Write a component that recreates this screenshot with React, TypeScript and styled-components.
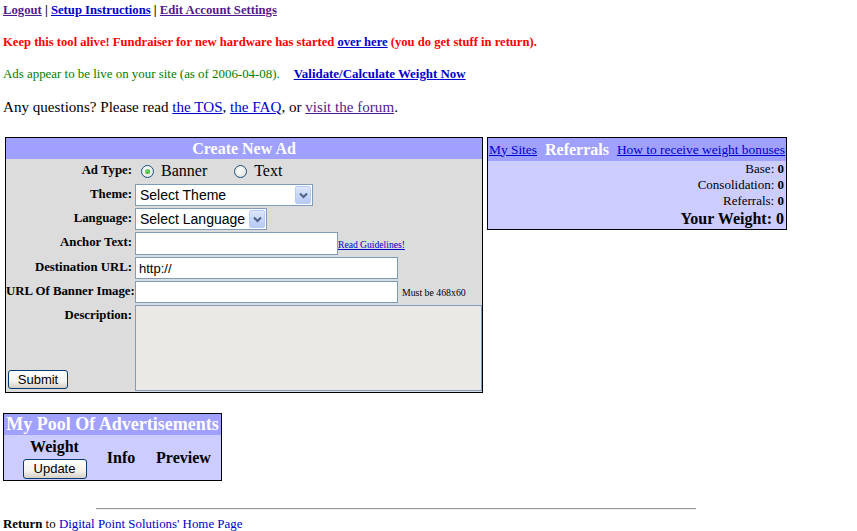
import React from "react";
import styled, { createGlobalStyle } from "styled-components";

const GlobalStyle = createGlobalStyle`
  html, body {
    margin: 0;
    background: #ffffff;
  }
  body {
    font-family: "Liberation Serif", "Times New Roman", serif;
    color: #000000;
  }
`;

const Page = styled.div`
  padding: 3px 3px 0;
`;

const Link = styled.a<{ $visited?: boolean }>`
  color: ${(p) => (p.$visited ? "#551a8b" : "#0000cc")};
  text-decoration: underline;
  cursor: pointer;
`;

const Nav = styled.div`
  font-size: 12.7px;
  font-weight: bold;
  line-height: 14px;
`;

const Alert = styled.div`
  margin-top: 18px;
  font-size: 12.6px;
  font-weight: bold;
  line-height: 14px;
  color: #ff0000;
`;

const Status = styled.div`
  margin-top: 18px;
  font-size: 12.9px;
  line-height: 14px;
  color: #008000;
`;

const StatusLink = styled(Link)`
  font-weight: bold;
  margin-left: 14px;
`;

const Question = styled.div`
  margin-top: 17px;
  font-size: 15.1px;
  line-height: 18px;
`;

const TopRow = styled.div`
  margin-top: 21px;
  padding-left: 2px;
  display: flex;
  align-items: flex-start;
  gap: 4px;
`;

const Panel = styled.div<{ $width: number; $bg: string }>`
  box-sizing: border-box;
  width: ${(p) => p.$width}px;
  border: 1px solid #000000;
  background: ${(p) => p.$bg};
`;

const PanelTitle = styled.div<{ $size: number }>`
  background: #a0a0ff;
  color: #ffffff;
  font-weight: bold;
  font-size: ${(p) => p.$size}px;
  line-height: 21px;
  height: 21px;
  text-align: center;
  white-space: nowrap;
`;

const FormGrid = styled.div`
  display: grid;
  grid-template-columns: 127px 347px;
  column-gap: 2px;
  row-gap: 2px;
  padding: 1px 0 1px;
`;

const Label = styled.div`
  font-size: 12.8px;
  font-weight: bold;
  line-height: 21px;
  text-align: right;
  white-space: nowrap;
  padding-right: 1px;
`;

const Field = styled.div<{ $align?: string }>`
  display: flex;
  align-items: ${(p) => p.$align ?? "center"};
  gap: 4px;
  min-height: 22px;
`;

const RadioGroup = styled.label`
  display: flex;
  align-items: center;
  font-size: 16px;
  margin-left: 6px;
  margin-right: 17px;
`;

const Radio = styled.input`
  appearance: none;
  width: 13px;
  height: 13px;
  margin: 0 7px 0 0;
  border: 1px solid #1c5180;
  border-radius: 50%;
  background: radial-gradient(circle at 40% 35%, #ffffff 0%, #dcdcd6 100%);
  display: grid;
  place-items: center;
  box-sizing: border-box;

  &:checked::after {
    content: "";
    width: 5px;
    height: 5px;
    border-radius: 50%;
    background: radial-gradient(circle at 40% 40%, #7fdc6c 0%, #21a121 100%);
  }
`;

const SelectWrap = styled.div<{ $width: number }>`
  position: relative;
  width: ${(p) => p.$width}px;
  height: 22px;
`;

const Select = styled.select`
  appearance: none;
  box-sizing: border-box;
  width: 100%;
  height: 100%;
  border: 1px solid #7f9db9;
  background: #ffffff;
  font-family: "Liberation Sans", Arial, sans-serif;
  font-size: 14px;
  padding: 0 0 0 4px;
  color: #000000;
`;

const SelectArrow = styled.span`
  position: absolute;
  right: 2px;
  top: 2px;
  width: 16px;
  height: 18px;
  box-sizing: border-box;
  border: 1px solid #b9cbf3;
  border-radius: 2px;
  background: linear-gradient(#dbe5fd, #b7c9f5);
  display: grid;
  place-items: center;
  pointer-events: none;
`;

const TextInput = styled.input<{ $width: number; $height?: number }>`
  box-sizing: border-box;
  width: ${(p) => p.$width}px;
  height: ${(p) => p.$height ?? 22}px;
  border: 1px solid #7f9db9;
  background: #ffffff;
  font-family: "Liberation Sans", Arial, sans-serif;
  font-size: 13px;
  padding: 0 3px;
  margin: 0;
`;

const Small = styled.span`
  font-size: 9.8px;
  white-space: nowrap;
`;

const SmallLink = styled(Link)`
  font-size: 9.6px;
  white-space: nowrap;
  margin-bottom: 5px;
  margin-left: -4px;
`;

const DescLabelCell = styled.div`
  display: flex;
  flex-direction: column;
  justify-content: space-between;
  align-items: stretch;
  padding-bottom: 2px;
`;

const TextArea = styled.textarea`
  box-sizing: border-box;
  width: 347px;
  height: 86px;
  border: 1px solid #7f9db9;
  background: #ebe9e5;
  resize: none;
  margin: 0;
`;

const XpButton = styled.button<{ $width: number; $height: number }>`
  width: ${(p) => p.$width}px;
  height: ${(p) => p.$height}px;
  border: 1px solid #003c74;
  border-radius: 3px;
  background: linear-gradient(#ffffff 0%, #f4f3ee 60%, #d6d0c5 100%);
  font-family: "Liberation Sans", Arial, sans-serif;
  font-size: 13px;
  color: #000000;
  padding: 0;
  line-height: 1;
`;

const SubmitButton = styled(XpButton)`
  margin-left: 2px;
`;

const RefHeader = styled.div`
  background: #a0a0ff;
  height: 23px;
  display: flex;
  align-items: center;
  justify-content: space-between;
  padding: 0 1px;
  font-size: 13.4px;
  white-space: nowrap;
`;

const RefTitle = styled.span`
  color: #ffffff;
  font-weight: bold;
  font-size: 16px;
`;

const RefBody = styled.div`
  padding: 0 2px 1px 0;
  text-align: right;
`;

const RefLine = styled.div<{ $big?: boolean }>`
  font-size: ${(p) => (p.$big ? 16 : 13)}px;
  line-height: ${(p) => (p.$big ? 19 : 16)}px;
  font-weight: ${(p) => (p.$big ? "bold" : "normal")};
  white-space: nowrap;

  b {
    font-weight: bold;
  }
`;

const PoolPanel = styled(Panel)`
  margin-top: 20px;
`;

const PoolRow = styled.div`
  display: grid;
  grid-template-columns: 99px 34px 1fr;
  align-items: center;
  height: 45px;
  padding-left: 1px;
  font-size: 16px;
  font-weight: bold;
`;

const WeightCell = styled.div`
  display: flex;
  flex-direction: column;
  align-items: center;
  padding-top: 1px;
  line-height: 18px;
  gap: 3px;
`;

const PoolHead = styled.div<{ $shift?: number }>`
  text-align: center;
  padding-left: ${(p) => p.$shift ?? 0}px;
`;

const Rule = styled.hr`
  width: 600px;
  margin: 27px 0 0 93px;
  border: 0;
  border-top: 1px solid #9a9a9a;
  border-bottom: 1px solid #eeeeee;
  height: 0;
`;

const Footer = styled.div`
  margin-top: 7px;
  font-size: 12.9px;
  line-height: 15px;
`;

const FooterLink = styled.a`
  color: #0000cc;
  text-decoration: none;
`;

function Chevron() {
  return (
    <svg width="9" height="7" viewBox="0 0 9 7">
      <path d="M1 1.5 L4.5 5 L8 1.5" fill="none" stroke="#4d6185" strokeWidth="2" />
    </svg>
  );
}

function DropDown({ width, label }: { width: number; label: string }) {
  return (
    <SelectWrap $width={width}>
      <Select defaultValue="">
        <option value="">{label}</option>
      </Select>
      <SelectArrow>
        <Chevron />
      </SelectArrow>
    </SelectWrap>
  );
}

export default function App() {
  return (
    <Page>
      <GlobalStyle />
      <Nav>
        <Link $visited>Logout</Link> | <Link>Setup Instructions</Link> | <Link $visited>Edit Account Settings</Link>
      </Nav>
      <Alert>
        Keep this tool alive! Fundraiser for new hardware has started <Link>over here</Link> (you do get stuff in
        return).
      </Alert>
      <Status>
        Ads appear to be live on your site (as of 2006-04-08).
        <StatusLink>Validate/Calculate Weight Now</StatusLink>
      </Status>
      <Question>
        Any questions? Please read <Link>the TOS</Link>, <Link>the FAQ</Link>, or <Link $visited>visit the forum</Link>.
      </Question>

      <TopRow>
        <Panel $width={478} $bg="#dcdcdc">
          <PanelTitle $size={16}>Create New Ad</PanelTitle>
          <FormGrid>
            <Label>Ad Type:</Label>
            <Field>
              <RadioGroup>
                <Radio type="radio" name="adtype" defaultChecked />
                Banner
              </RadioGroup>
              <RadioGroup>
                <Radio type="radio" name="adtype" />
                Text
              </RadioGroup>
            </Field>

            <Label>Theme:</Label>
            <Field>
              <DropDown width={178} label="Select Theme" />
            </Field>

            <Label>Language:</Label>
            <Field>
              <DropDown width={132} label="Select Language" />
            </Field>

            <Label>Anchor Text:</Label>
            <Field $align="flex-end">
              <TextInput $width={203} $height={23} />
              <SmallLink>Read Guidelines!</SmallLink>
            </Field>

            <Label>Destination URL:</Label>
            <Field>
              <TextInput $width={263} defaultValue="http://" />
            </Field>

            <Label>URL Of Banner Image:</Label>
            <Field>
              <TextInput $width={263} />
              <Small>Must be 468x60</Small>
            </Field>

            <DescLabelCell>
              <Label>Description:</Label>
              <div>
                <SubmitButton $width={60} $height={19}>
                  Submit
                </SubmitButton>
              </div>
            </DescLabelCell>
            <Field>
              <TextArea />
            </Field>
          </FormGrid>
        </Panel>

        <Panel $width={300} $bg="#ccccff">
          <RefHeader>
            <Link>My Sites</Link>
            <RefTitle>Referrals</RefTitle>
            <Link>How to receive weight bonuses</Link>
          </RefHeader>
          <RefBody>
            <RefLine>
              Base: <b>0</b>
            </RefLine>
            <RefLine>
              Consolidation: <b>0</b>
            </RefLine>
            <RefLine>
              Referrals: <b>0</b>
            </RefLine>
            <RefLine $big>Your Weight: 0</RefLine>
          </RefBody>
        </Panel>
      </TopRow>

      <PoolPanel $width={219} $bg="#ccccff">
        <PanelTitle $size={18}>My Pool Of Advertisements</PanelTitle>
        <PoolRow>
          <WeightCell>
            Weight
            <XpButton $width={64} $height={20}>
              Update
            </XpButton>
          </WeightCell>
          <PoolHead>Info</PoolHead>
          <PoolHead $shift={8}>Preview</PoolHead>
        </PoolRow>
      </PoolPanel>

      <Rule />
      <Footer>
        <b>Return</b> to <FooterLink>Digital Point Solutions' Home Page</FooterLink>
      </Footer>
    </Page>
  );
}
